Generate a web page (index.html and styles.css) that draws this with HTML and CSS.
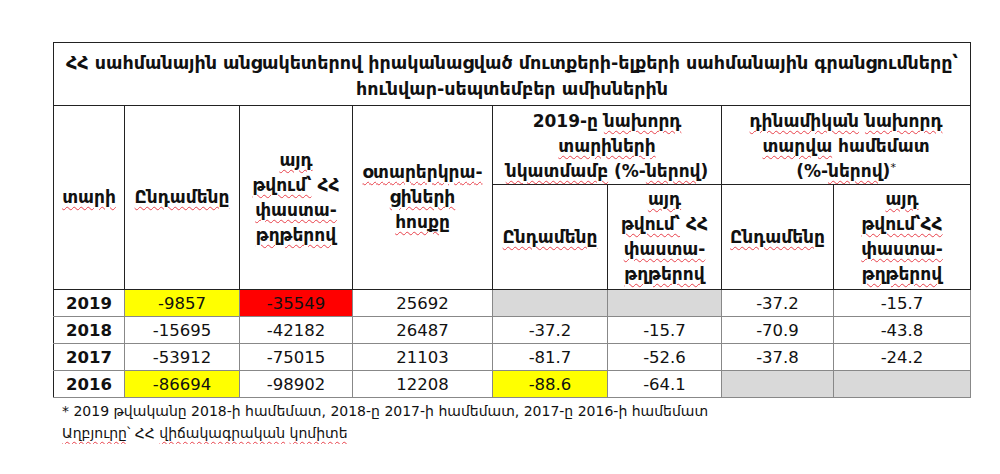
FILE: index.html
```html
<!DOCTYPE html>
<html lang="hy">

<head>
    <meta charset="UTF-8">
    <meta name="viewport" content="width=device-width, initial-scale=1.0">
    <title>Սահմանային գրանցումներ</title>
    <link rel="stylesheet" href="styles.css">
</head>

<body>
    <div id="page">
        <table id="stats">
            <colgroup>
                <col class="c-year">
                <col class="c-total">
                <col class="c-doc">
                <col class="c-foreign">
                <col class="c-p1">
                <col class="c-p2">
                <col class="c-d1">
                <col class="c-d2">
            </colgroup>
            <tr class="title-row">
                <th colspan="8">ՀՀ սահմանային անցակետերով իրականացված մուտքերի-ելքերի սահմանային գրանցումները՝<br>հունվար-սեպտեմբեր ամիսներին</th>
            </tr>
            <tr class="head-1">
                <th rowspan="2"><span class="sp">տարի</span></th>
                <th rowspan="2"><span class="sp">Ընդամենը</span></th>
                <th rowspan="2" class="gray-l"><span class="sp">այդ</span><br><span class="sp">թվում՝</span> ՀՀ<br><span class="sp">փաստա-</span><br><span class="sp">թղթերով</span></th>
                <th rowspan="2" class="gray-l"><span class="sp">օտարերկրա-</span><br><span class="sp">ցիների</span><br><span class="sp">հոսքը</span></th>
                <th colspan="2" class="gray-l">2019-<span class="sp">ը</span> <span class="sp">նախորդ</span><br><span class="sp">տարիների</span><br><span class="sp">նկատմամբ</span> (%-<span class="sp">ներով</span>)</th>
                <th colspan="2"><span class="sp">դինամիկան</span> <span class="sp">նախորդ</span><br><span class="sp">տարվա</span> համեմատ<br>(%-<span class="sp">ներով</span>)<span class="star">*</span></th>
            </tr>
            <tr class="head-2">
                <th class="gray-l"><span class="sp">Ընդամենը</span></th>
                <th><span class="sp">այդ</span><br><span class="sp">թվում՝</span> ՀՀ<br><span class="sp">փաստա-</span><br><span class="sp">թղթերով</span></th>
                <th><span class="sp">Ընդամենը</span></th>
                <th class="gray-l"><span class="sp">այդ</span><br><span class="sp">թվում՝ՀՀ</span><br><span class="sp">փաստա-</span><br><span class="sp">թղթերով</span></th>
            </tr>
            <tr class="data">
                <td class="year">2019</td>
                <td class="yellow">-9857</td>
                <td class="red">-35549</td>
                <td>25692</td>
                <td class="empty"></td>
                <td class="empty"></td>
                <td>-37.2</td>
                <td>-15.7</td>
            </tr>
            <tr class="data">
                <td class="year">2018</td>
                <td>-15695</td>
                <td>-42182</td>
                <td>26487</td>
                <td>-37.2</td>
                <td>-15.7</td>
                <td>-70.9</td>
                <td>-43.8</td>
            </tr>
            <tr class="data">
                <td class="year">2017</td>
                <td>-53912</td>
                <td>-75015</td>
                <td>21103</td>
                <td>-81.7</td>
                <td>-52.6</td>
                <td>-37.8</td>
                <td>-24.2</td>
            </tr>
            <tr class="data">
                <td class="year">2016</td>
                <td class="yellow">-86694</td>
                <td>-98902</td>
                <td>12208</td>
                <td class="yellow">-88.6</td>
                <td>-64.1</td>
                <td class="empty"></td>
                <td class="empty"></td>
            </tr>
        </table>
        <div class="notes">
            <p>* 2019 թվականը 2018-ի համեմատ, 2018-ը 2017-ի համեմատ, 2017-ը 2016-ի համեմատ</p>
            <p><span class="sp">Աղբյուրը</span>՝ ՀՀ <span class="sp">վիճակագրական</span> <span class="sp">կոմիտե</span></p>
        </div>
    </div>
</body>

</html>
```

FILE: styles.css
```css
body {
    margin: 0;
    background-color: white;
    font-family: "DejaVu Sans", sans-serif;
    color: #111;
}

#page {
    padding: 42px 0 0 53px;
}

#stats {
    border-collapse: collapse;
    table-layout: fixed;
    width: 918px;
    border: 1px solid #777;
}

.c-year { width: 71px; }
.c-total { width: 115px; }
.c-doc { width: 113px; }
.c-foreign { width: 140px; }
.c-p1 { width: 115px; }
.c-p2 { width: 114px; }
.c-d1 { width: 112px; }
.c-d2 { width: 137px; }

th,
td {
    border: 1px solid #222;
    padding: 0;
    text-align: center;
}

th {
    font-size: 17px;
    font-weight: bold;
    line-height: 25px;
}

.title-row th {
    height: 58px;
    font-size: 17.5px;
    line-height: 26px;
    padding: 4px 0 0;
}

.head-1 th {
    height: 76px;
}

.head-2 th {
    height: 104px;
}

.head-1 th[colspan] {
    line-height: 25px;
    padding-top: 2px;
}

.gray-l {
    border-left-color: #888;
}

.star {
    position: relative;
    top: -6px;
    font-size: 11px;
    font-weight: normal;
    line-height: 0;
}

.sp {
    text-decoration: underline wavy #e8404a;
    text-decoration-thickness: 1px;
    text-underline-offset: 3px;
}

.data td {
    height: 26px;
    font-size: 16.5px;
    border-color: #888;
    border-left-color: #222;
}

.data td.year {
    font-weight: bold;
}

.yellow {
    background-color: #ffff00;
}

.red {
    background-color: #ff0000;
}

.empty {
    background-color: #d9d9d9;
}

.notes {
    padding: 2px 0 0 9px;
    font-size: 14px;
    line-height: 22px;
}

.notes p {
    margin: 0;
}
```
